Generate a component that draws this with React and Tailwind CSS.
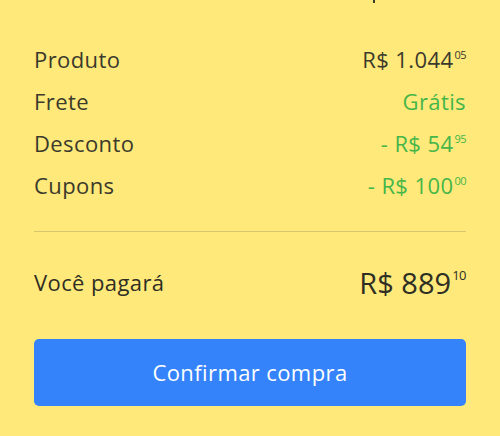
export default function App() {
  const font = { fontFamily: '"Open Sans", "Lato", sans-serif' };
  const Sup = ({ children }) => (
    <span className="text-[11px] leading-none self-start mt-[1px] ml-[1px] tracking-[-0.5px]">{children}</span>
  );
  const Row = ({ label, value, cents, green }) => (
    <div className="flex h-[42px] items-center justify-between">
      <span className="text-[22px] tracking-[0.4px] text-[#3b3a2c]">{label}</span>
      <span className={`flex items-start text-[22px] tracking-[0.4px] leading-none ${green ? "text-[#46b649]" : "text-[#3b3a2c]"}`}>
        <span>{value}</span>
        {cents && <Sup>{cents}</Sup>}
      </span>
    </div>
  );
  return (
    <div className="h-[436px] w-[500px] overflow-hidden bg-[#fee97a]" style={font}>
      <div className="h-[38px]">
        <div className="ml-[373px] h-[3px] w-[2px] bg-[#3b3a2c]" />
      </div>
      <div className="px-[34px]">
        <Row label="Produto" value="R$ 1.044" cents="05" />
        <Row label="Frete" value="Grátis" green />
        <Row label="Desconto" value="- R$ 54" cents="95" green />
        <Row label="Cupons" value="- R$ 100" cents="00" green />
        <div className="mt-[25px] h-px bg-[#d6c66e]" />
        <div className="mt-[29px] flex h-[42px] items-center justify-between">
          <span className="text-[22px] tracking-[0.4px] text-[#2f2e24]">Você pagará</span>
          <span className="flex items-start text-[29px] leading-none text-[#2f2e24]">
            <span>R$ 889</span>
            <span className="ml-[1px] mt-[1px] text-[13px] leading-none tracking-[-0.5px]">10</span>
          </span>
        </div>
        <button className="mt-[36px] flex h-[67px] w-full items-center justify-center rounded-[5px] bg-[#3483fa] text-[22px] tracking-[0.4px] text-white">
          Confirmar compra
        </button>
      </div>
    </div>
  );
}
